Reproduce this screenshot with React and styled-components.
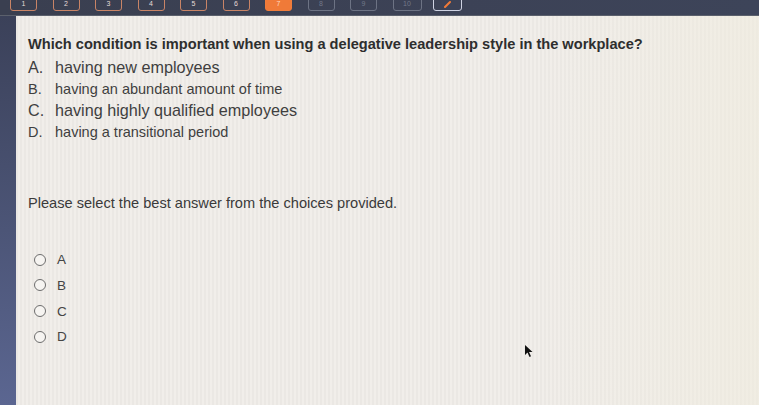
import React from 'react';
import styled, { createGlobalStyle } from 'styled-components';

const Global = createGlobalStyle`
  html, body {
    margin: 0;
    padding: 0;
    width: 759px;
    height: 405px;
    overflow: hidden;
    background: #3d4358;
  }
`;

const Screen = styled.div`
  position: relative;
  width: 759px;
  height: 405px;
  display: grid;
  grid-template-rows: 16px 1fr;
  font-family: 'Liberation Sans', Arial, sans-serif;
`;

const TopBar = styled.div`
  display: flex;
  align-items: flex-end;
  gap: 15.5px;
  padding: 0 0 4px 10px;
  overflow: hidden;
  background: linear-gradient(90deg, #3a3f50 0%, #3c4256 60%, #3d4459 100%);
  border-bottom: 1px solid #5b606c;
`;

const NavButton = styled.div`
  flex: none;
  width: ${p => (p.wide ? 29 : 27)}px;
  height: 24px;
  margin-left: ${p => (p.next ? -4 : 0)}px;
  border-radius: 3px;
  box-sizing: border-box;
  border: 1.5px solid ${p => (p.current ? '#f07d3c' : p.done ? '#c98466' : p.next ? '#cfd3e3' : '#6d7384')};
  background: ${p => (p.current ? '#f07a38' : 'transparent')};
  display: flex;
  align-items: flex-end;
  justify-content: center;
  padding-bottom: 2px;
  color: ${p => (p.current ? '#ffd9c2' : p.done ? '#e6dcd6' : '#727889')};
  font-size: 7px;
  line-height: 8px;
`;

const Body = styled.div`
  display: grid;
  grid-template-columns: 16px 1fr;
`;

const SideStrip = styled.div`
  background: linear-gradient(180deg, #3b4159 0%, #4c5577 55%, #5b6691 100%);
`;

const Panel = styled.div`
  background:
    linear-gradient(90deg, rgba(255,255,255,0) 0%, rgba(255,255,255,0) 70%, rgba(240,236,222,0.6) 100%),
    repeating-linear-gradient(90deg, #ebe8e4 0px, #ebe8e4 2px, #f1eeea 2px, #f1eeea 4px);
  padding: 20px 0 0 12px;
  color: #383838;
`;

const Question = styled.div`
  font-weight: bold;
  font-size: 14.6px;
  line-height: 17px;
  color: #2e2e2e;
  margin-bottom: 4px;
`;

const Choices = styled.div`
  display: flex;
  flex-direction: column;
`;

const Choice = styled.div`
  display: flex;
  align-items: center;
  height: 21.5px;
  font-size: ${p => (p.big ? 16.2 : 14.5)}px;
  color: #3f3f3f;
`;

const Letter = styled.span`
  width: 27px;
  flex: none;
`;

const Instruction = styled.div`
  margin-top: 52px;
  font-size: 14.6px;
  line-height: 17px;
  color: #3a3a3a;
`;

const Radios = styled.div`
  display: flex;
  flex-direction: column;
  gap: 10.2px;
  margin-top: 40px;
  padding-left: 6px;
`;

const RadioRow = styled.div`
  display: flex;
  align-items: center;
  gap: 11px;
  height: 15.5px;
  font-size: 13.5px;
  color: #444;
`;

const RadioCircle = styled.span`
  width: 12px;
  height: 12px;
  box-sizing: border-box;
  border-radius: 50%;
  border: 1.5px solid #6d6d6d;
  background: #f6f4f1;
  flex: none;
`;

const Cursor = styled.svg`
  position: absolute;
  left: 524px;
  top: 344px;
`;

const navs = [
  { n: 1, done: true }, { n: 2, done: true }, { n: 3, done: true },
  { n: 4, done: true }, { n: 5, done: true }, { n: 6, done: true },
  { n: 7, current: true }, { n: 8 }, { n: 9 }, { n: 10, wide: true },
];

const options = [
  { l: 'A.', t: 'having new employees', big: true },
  { l: 'B.', t: 'having an abundant amount of time' },
  { l: 'C.', t: 'having highly qualified employees', big: true },
  { l: 'D.', t: 'having a transitional period' },
];

export default function App() {
  return (
    <>
      <Global />
      <Screen>
        <TopBar>
          {navs.map(b => (
            <NavButton key={b.n} done={b.done} current={b.current} wide={b.wide}>
              {b.n}
            </NavButton>
          ))}
          <NavButton next wide>
            <svg width="10" height="8" viewBox="0 0 10 8">
              <path d="M2 7 L7 2" stroke="#f07a38" strokeWidth="2" strokeLinecap="round" />
            </svg>
          </NavButton>
        </TopBar>
        <Body>
          <SideStrip />
          <Panel>
            <Question>
              Which condition is important when using a delegative leadership style in the workplace?
            </Question>
            <Choices>
              {options.map(o => (
                <Choice key={o.l} big={o.big}>
                  <Letter>{o.l}</Letter>
                  {o.t}
                </Choice>
              ))}
            </Choices>
            <Instruction>Please select the best answer from the choices provided.</Instruction>
            <Radios>
              {['A', 'B', 'C', 'D'].map(r => (
                <RadioRow key={r}>
                  <RadioCircle />
                  {r}
                </RadioRow>
              ))}
            </Radios>
          </Panel>
        </Body>
        <Cursor width="10" height="14" viewBox="0 0 10 14">
          <path d="M1 1 L1 11 L3.5 8.5 L5.5 13 L7 12.3 L5 8 L8.5 8 Z" fill="#111" />
        </Cursor>
      </Screen>
    </>
  );
}
